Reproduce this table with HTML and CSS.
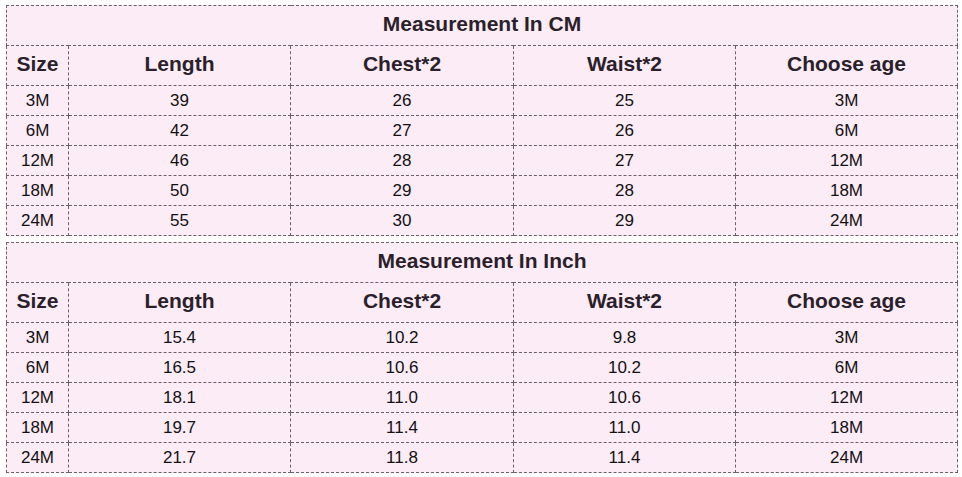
FILE: index.html
```html
<!DOCTYPE html>
<html>
<head>
<meta charset="utf-8">
<link rel="stylesheet" href="styles.css">
</head>
<body>
<div class="page">
<table class="size-table">
  <colgroup><col class="c-size"><col class="c-wide"><col class="c-chest"><col class="c-wide"><col class="c-wide"></colgroup>
  <tr class="title-row"><th colspan="5">Measurement In CM</th></tr>
  <tr class="head-row"><th>Size</th><th>Length</th><th>Chest*2</th><th>Waist*2</th><th>Choose age</th></tr>
  <tr class="data-row"><td>3M</td><td>39</td><td>26</td><td>25</td><td>3M</td></tr>
  <tr class="data-row"><td>6M</td><td>42</td><td>27</td><td>26</td><td>6M</td></tr>
  <tr class="data-row"><td>12M</td><td>46</td><td>28</td><td>27</td><td>12M</td></tr>
  <tr class="data-row"><td>18M</td><td>50</td><td>29</td><td>28</td><td>18M</td></tr>
  <tr class="data-row"><td>24M</td><td>55</td><td>30</td><td>29</td><td>24M</td></tr>
</table>
<table class="size-table">
  <colgroup><col class="c-size"><col class="c-wide"><col class="c-chest"><col class="c-wide"><col class="c-wide"></colgroup>
  <tr class="title-row"><th colspan="5">Measurement In Inch</th></tr>
  <tr class="head-row"><th>Size</th><th>Length</th><th>Chest*2</th><th>Waist*2</th><th>Choose age</th></tr>
  <tr class="data-row"><td>3M</td><td>15.4</td><td>10.2</td><td>9.8</td><td>3M</td></tr>
  <tr class="data-row"><td>6M</td><td>16.5</td><td>10.6</td><td>10.2</td><td>6M</td></tr>
  <tr class="data-row"><td>12M</td><td>18.1</td><td>11.0</td><td>10.6</td><td>12M</td></tr>
  <tr class="data-row"><td>18M</td><td>19.7</td><td>11.4</td><td>11.0</td><td>18M</td></tr>
  <tr class="data-row"><td>24M</td><td>21.7</td><td>11.8</td><td>11.4</td><td>24M</td></tr>
</table>
</div>
</body>
</html>
```

FILE: styles.css
```css
html, body {
  margin: 0;
  padding: 0;
  background: #ffffff;
}
.page {
  padding: 5px 0 0 6px;
  display: flex;
  flex-direction: column;
  gap: 6px;
}
.size-table {
  width: 951px;
  table-layout: fixed;
  border-collapse: collapse;
  background: #fbecf5;
  font-family: "Liberation Sans", Arial, sans-serif;
}
.c-size { width: 62px; }
.c-wide { width: 222px; }
.c-chest { width: 223px; }
.size-table th,
.size-table td {
  border: 1px dashed #6e5e6c;
  text-align: center;
  padding: 0;
}
.title-row th,
.head-row th {
  height: 36px;
  padding-bottom: 3px;
  font-size: 21px;
  font-weight: bold;
  color: #2b1f2b;
}
.data-row td {
  height: 29px;
  font-size: 17px;
  color: #141014;
}
```
